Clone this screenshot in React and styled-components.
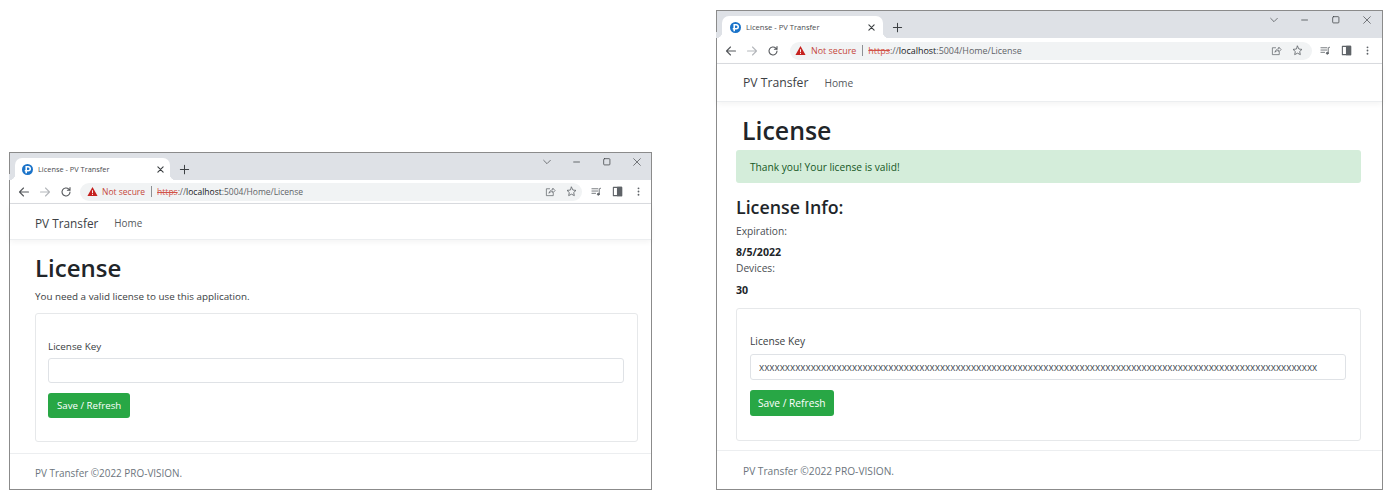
import React from 'react';
import styled, { createGlobalStyle } from 'styled-components';

const GlobalStyle = createGlobalStyle`
  html, body {
    margin: 0;
    padding: 0;
    background: #fff;
    font-family: 'Open Sans', 'Noto Sans', 'Liberation Sans', sans-serif;
  }
`;

const Desktop = styled.div`
  display: flex;
  align-items: flex-start;
  gap: 64px;
  width: 1392px;
  height: 499px;
  padding: 10px 0 0 9px;
  box-sizing: border-box;
  overflow: hidden;
`;

const Window = styled.div`
  display: flex;
  flex-direction: column;
  flex: none;
  box-sizing: border-box;
  width: ${(p) => (p.$wide ? 667 : 643)}px;
  height: ${(p) => (p.$wide ? 480 : 338)}px;
  margin-top: ${(p) => (p.$wide ? 0 : 142)}px;
  border: 1px solid #8b8b8b;
  background: #fff;
  color: #212529;
`;

const TabStrip = styled.div`
  position: relative;
  display: flex;
  align-items: flex-end;
  flex: none;
  height: 27px;
  padding-left: 5px;
  box-sizing: border-box;
  background: #dee1e6;
`;

const Tab = styled.div`
  position: relative;
  display: flex;
  align-items: center;
  width: ${(p) => (p.$wide ? 161 : 155)}px;
  height: 22px;
  padding: 0 6px 0 ${(p) => (p.$wide ? 8 : 7)}px;
  box-sizing: border-box;
  background: #fff;
  border-radius: 7px 7px 0 0;

  &::before,
  &::after {
    content: '';
    position: absolute;
    bottom: 0;
    width: 6px;
    height: 6px;
  }
  &::before {
    left: -6px;
    background: radial-gradient(circle at 0 0, #dee1e6 6px, #fff 6.5px);
  }
  &::after {
    right: -6px;
    background: radial-gradient(circle at 100% 0, #dee1e6 6px, #fff 6.5px);
  }
`;

const TabTitle = styled.span`
  flex: 1;
  margin-left: 5px;
  font-size: ${(p) => (p.$wide ? 7.6 : 7.4)}px;
  color: #4a4c50;
  white-space: nowrap;
`;

const TabClose = styled.span`
  display: flex;
  margin-right: ${(p) => (p.$wide ? 1 : -1)}px;
  color: #3c4043;
`;

const NewTab = styled.span`
  display: flex;
  margin: 0 0 5px 9px;
  color: #3c4043;
`;

const WindowControls = styled.div`
  position: absolute;
  top: 4px;
  right: ${(p) => (p.$wide ? 10 : 9)}px;
  display: flex;
  align-items: center;
  gap: ${(p) => (p.$wide ? 21 : 20)}px;
  color: #3c4043;
`;

const Toolbar = styled.div`
  display: flex;
  align-items: center;
  flex: none;
  height: ${(p) => (p.$wide ? 26 : 24)}px;
  padding: 0 ${(p) => (p.$wide ? 9.5 : 7)}px 0 8px;
  box-sizing: border-box;
  background: #fff;
  border-bottom: 1px solid #dadce0;
`;

const NavButton = styled.span`
  display: flex;
  width: 13px;
  margin-right: 8px;
  color: ${(p) => (p.$off ? '#b4b7bb' : '#55585c')};
`;

const Omnibox = styled.div`
  display: flex;
  align-items: center;
  flex: 1;
  height: 18px;
  margin-left: ${(p) => (p.$wide ? 2 : -1)}px;
  padding: 0 ${(p) => (p.$wide ? 9 : 5)}px 0 ${(p) => (p.$wide ? 5 : 7)}px;
  background: #f1f3f4;
  border-radius: 9px;
  font-size: ${(p) => (p.$wide ? 8.95 : 8.5)}px;
  white-space: nowrap;
`;

const NotSecure = styled.span`
  margin-left: ${(p) => (p.$wide ? 5 : 4)}px;
  color: #c5483c;
`;

const Divider = styled.span`
  width: 1px;
  height: 11px;
  margin: 0 5.5px;
  background: #8d9094;
`;

const Scheme = styled.span`
  color: #d25348;
  text-decoration: line-through;
`;

const UrlHost = styled.span`
  color: #202124;
`;

const UrlRest = styled.span`
  color: #5f6368;
`;

const OmniIcons = styled.div`
  display: flex;
  align-items: center;
  gap: 10px;
  margin-left: auto;
  color: #5f6368;
`;

const ToolIcons = styled.div`
  display: flex;
  align-items: center;
  gap: 10px;
  margin-left: ${(p) => (p.$wide ? 8 : 9.5)}px;
  color: #5f6368;
`;

const NavBar = styled.nav`
  position: relative;
  display: flex;
  align-items: center;
  flex: none;
  height: ${(p) => (p.$wide ? 38 : 36)}px;
  padding: ${(p) => (p.$wide ? 0 : 2)}px 0 0 ${(p) => (p.$wide ? 26 : 25)}px;
  box-sizing: border-box;
  border-bottom: 1px solid #eceef0;
  box-shadow: 0 2px 6px rgba(0, 0, 0, 0.05);
`;

const Brand = styled.span`
  font-size: ${(p) => (p.$wide ? 12.2 : 11.8)}px;
  color: #3d4145;
`;

const NavLink = styled.span`
  margin-left: 16px;
  font-size: ${(p) => (p.$wide ? 10.2 : 9.9)}px;
  color: #55595d;
`;

const Main = styled.main`
  flex: 1;
  padding: ${(p) => (p.$wide ? '12px 21px 0 19px' : '12px 13px 0 25px')};
`;

const Title = styled.h1`
  margin: 0;
  padding-left: ${(p) => (p.$wide ? 6 : 0)}px;
  font-size: ${(p) => (p.$wide ? 24.9 : 24)}px;
  line-height: 32px;
  font-weight: 550;
  color: #212529;
`;

const Lead = styled.p`
  margin: 5px 0 0;
  font-size: 9.83px;
  line-height: 14px;
  color: #3a3e42;
`;

const Alert = styled.div`
  display: flex;
  align-items: center;
  height: 33px;
  margin-top: 4px;
  padding-left: 14px;
  border-radius: 3px;
  background: #d4edda;
  color: #155724;
  font-size: 10.2px;
`;

const InfoTitle = styled.h2`
  margin: 12px 0 0;
  font-size: 17.8px;
  line-height: 24px;
  font-weight: 550;
  color: #212529;
`;

const InfoLabel = styled.div`
  margin-top: ${(p) => p.$top}px;
  font-size: 10.2px;
  line-height: 14px;
  color: #4a4e52;
`;

const InfoValue = styled.div`
  margin-top: ${(p) => p.$top}px;
  font-size: 10.6px;
  line-height: 14px;
  font-weight: 700;
  color: #212529;
`;

const Card = styled.section`
  display: flex;
  flex-direction: column;
  align-items: flex-start;
  box-sizing: border-box;
  height: ${(p) => (p.$wide ? 133 : 129)}px;
  margin-top: ${(p) => (p.$wide ? 11 : 10)}px;
  padding: ${(p) => (p.$wide ? '25px 14px 0 13px' : '25px 13px 0 12px')};
  border: 1px solid #e6e8ea;
  border-radius: 3px;
`;

const FieldLabel = styled.label`
  font-size: ${(p) => (p.$wide ? 10.2 : 9.85)}px;
  line-height: 14px;
  color: #3a3e42;
`;

const KeyInput = styled.input`
  display: block;
  width: 100%;
  height: ${(p) => (p.$wide ? 26 : 25)}px;
  margin-top: ${(p) => (p.$wide ? 6 : 5)}px;
  padding: 0 8px;
  box-sizing: border-box;
  border: 1px solid #dfe2e6;
  border-radius: 3px;
  background: #fff;
  font-family: inherit;
  font-size: 9.9px;
  color: #495057;
  outline: none;
`;

const SaveButton = styled.button`
  height: ${(p) => (p.$wide ? 26 : 25)}px;
  margin-top: 10px;
  padding: 0 ${(p) => (p.$wide ? 8 : 9)}px;
  border: 0;
  border-radius: 3px;
  background: #28a745;
  color: #fff;
  font-family: inherit;
  font-size: ${(p) => (p.$wide ? 10.2 : 9.7)}px;
`;

const Footer = styled.footer`
  display: flex;
  align-items: center;
  flex: none;
  box-sizing: border-box;
  height: ${(p) => (p.$wide ? 39 : 36)}px;
  padding: ${(p) => (p.$wide ? 2 : 3)}px 0 0 ${(p) => (p.$wide ? 26 : 25)}px;
  border-top: 1px solid #eceef0;
  font-size: ${(p) => (p.$wide ? 10.2 : 9.93)}px;
  color: #6c757d;
`;

const Icon = ({ size = 12, children, fill = 'none', sw = 1.3 }) => (
  <svg width={size} height={size} viewBox="0 0 12 12" fill={fill} stroke={fill === 'none' ? 'currentColor' : 'none'} strokeWidth={sw} strokeLinecap="round" strokeLinejoin="round">
    {children}
  </svg>
);

const Favicon = () => (
  <svg width="11" height="11" viewBox="0 0 12 12">
    <circle cx="6" cy="6" r="6" fill="#1a73c9" />
    <path d="M4.6 10V3h2.2a2.2 2.2 0 0 1 0 4.4H3" fill="none" stroke="#fff" strokeWidth="1.7" />
  </svg>
);

const ChromeBar = ({ wide }) => (
  <>
    <TabStrip>
      <Tab $wide={wide}>
        <Favicon />
        <TabTitle $wide={wide}>License - PV Transfer</TabTitle>
        <TabClose $wide={wide}>
          <Icon size={9} sw={1.5}><path d="M2.5 2.5l7 7M9.5 2.5l-7 7" /></Icon>
        </TabClose>
      </Tab>
      <NewTab>
        <Icon size={11} sw={1.1}><path d="M6 1.5v9M1.5 6h9" /></Icon>
      </NewTab>
      <WindowControls $wide={wide}>
        <Icon size={10} sw={0.8}><path d="M2 4l4 4 4-4" /></Icon>
        <Icon size={10} sw={0.9}><path d="M2 6h7" /></Icon>
        <Icon size={10} sw={0.9}><rect x="2" y="2" width="7.5" height="7.5" rx="1" /></Icon>
        <Icon size={10} sw={0.8}><path d="M2 2l8 8M10 2l-8 8" /></Icon>
      </WindowControls>
    </TabStrip>
    <Toolbar $wide={wide}>
      <NavButton>
        <Icon size={12} sw={1.1}><path d="M10.5 6h-9M5.5 2L1.5 6l4 4" /></Icon>
      </NavButton>
      <NavButton $off>
        <Icon size={12} sw={1.1}><path d="M1.5 6h9M6.5 2l4 4-4 4" /></Icon>
      </NavButton>
      <NavButton>
        <Icon size={12} sw={1.1}><path d="M10 6a4 4 0 1 1-1.2-2.9L10 4.3V1.6M10 4.3H7.4" /></Icon>
      </NavButton>
      <Omnibox $wide={wide}>
        <Icon size={11} fill="#c5221f"><path d="M6 1l5.5 10H.5z" /><path d="M5.5 4.5h1v3.5h-1zM5.5 8.7h1v1h-1z" fill="#fff" /></Icon>
        <NotSecure $wide={wide}>Not secure</NotSecure>
        <Divider />
        <Scheme>https</Scheme>
        <UrlRest>://</UrlRest>
        <UrlHost>localhost</UrlHost>
        <UrlRest>:5004/Home/License</UrlRest>
        <OmniIcons>
          <Icon size={11} sw={0.8}><path d="M5 3H1.5v7.5h7.5V8M4.5 7.5c.3-2 2-3.3 4-3.3V2.3L11 5 8.5 7.5V6C7 6 5.5 6.5 4.5 7.5z" /></Icon>
          <Icon size={11} sw={0.9}><path d="M6 1.2l1.5 3.2 3.4.4-2.5 2.3.7 3.4L6 8.9l-3.1 1.6.7-3.4L1.1 4.8l3.4-.4z" /></Icon>
        </OmniIcons>
      </Omnibox>
      <ToolIcons $wide={wide}>
        <Icon size={11} sw={0.9}><path d="M1 3h6.5M1 5.5h6.5M1 8h4M10.5 2.5L9 3v5.5" /><circle cx="8" cy="9" r="1.1" fill="currentColor" /></Icon>
        <Icon size={11} sw={1.2}><rect x="1.5" y="1.5" width="9" height="9" /><rect x="6" y="1.5" width="4.5" height="9" fill="currentColor" /></Icon>
        <Icon size={11} fill="#5f6368"><circle cx="6" cy="2.5" r="1" /><circle cx="6" cy="6" r="1" /><circle cx="6" cy="9.5" r="1" /></Icon>
      </ToolIcons>
    </Toolbar>
    <NavBar $wide={wide}>
      <Brand $wide={wide}>PV Transfer</Brand>
      <NavLink $wide={wide}>Home</NavLink>
    </NavBar>
  </>
);

const LicenseForm = ({ wide, value }) => (
  <Card $wide={wide}>
    <FieldLabel $wide={wide}>License Key</FieldLabel>
    <KeyInput $wide={wide} readOnly value={value} />
    <SaveButton $wide={wide}>Save / Refresh</SaveButton>
  </Card>
);

const App = () => (
  <>
    <GlobalStyle />
    <Desktop>
      <Window>
        <ChromeBar />
        <Main>
          <Title>License</Title>
          <Lead>You need a valid license to use this application.</Lead>
          <LicenseForm value="" />
        </Main>
        <Footer>PV Transfer ©2022 PRO-VISION.</Footer>
      </Window>
      <Window $wide>
        <ChromeBar wide />
        <Main $wide>
          <Title $wide>License</Title>
          <Alert>Thank you! Your license is valid!</Alert>
          <InfoTitle>License Info:</InfoTitle>
          <InfoLabel $top={5}>Expiration:</InfoLabel>
          <InfoValue $top={7}>8/5/2022</InfoValue>
          <InfoLabel $top={2}>Devices:</InfoLabel>
          <InfoValue $top={8}>30</InfoValue>
          <LicenseForm wide value={'x'.repeat(108)} />
        </Main>
        <Footer $wide>PV Transfer ©2022 PRO-VISION.</Footer>
      </Window>
    </Desktop>
  </>
);

export default App;
